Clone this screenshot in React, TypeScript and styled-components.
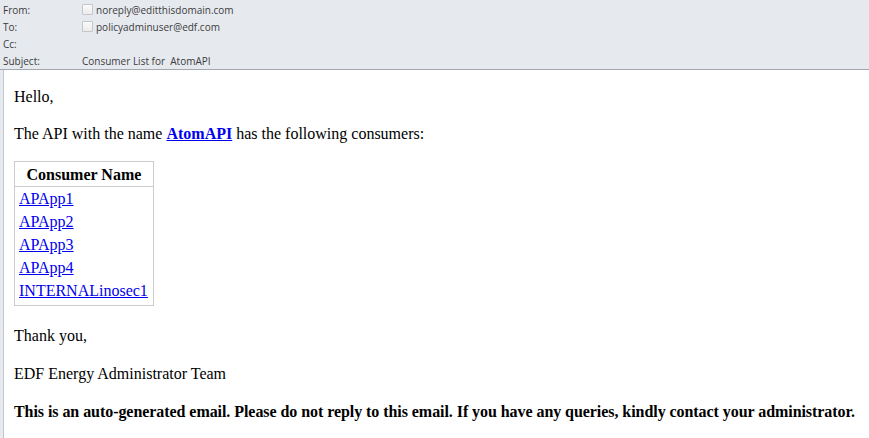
import React from "react";
import styled, { createGlobalStyle } from "styled-components";

const Global = createGlobalStyle`
  html, body { margin: 0; padding: 0; background: #e6e9ee; }
  body { width: 869px; height: 438px; overflow: hidden; }
`;

const Page = styled.div`
  display: flex;
  flex-direction: column;
  width: 869px;
  height: 438px;
  background: #e6e9ee;
`;

const Header = styled.div`
  display: flex;
  flex-direction: column;
  padding: 1px 0 0 3px;
  height: 68px;
  border-bottom: 1px solid #a3a7ae;
  font-family: "Open Sans", "Noto Sans", sans-serif;
  font-size: 10px;
  color: #3c3c3c;
`;

const HeaderRow = styled.div`
  display: flex;
  align-items: center;
  height: 17px;
`;

const Label = styled.span`
  width: 79px;
  flex: none;
`;

const Value = styled.span`
  display: flex;
  align-items: center;
  gap: 3px;
`;

const Check = styled.span`
  display: inline-block;
  width: 9px;
  height: 9px;
  border: 1px solid #c4c6ca;
  background: linear-gradient(#fafafa, #ececec);
  border-radius: 1px;
`;

const Body = styled.div`
  flex: 1;
  margin-left: 3px;
  border-left: 1px solid #c3c6cc;
  background: #ffffff;
  padding: 0 10px;
  font-family: "Liberation Serif", "Times New Roman", serif;
  font-size: 16px;
  color: #000;
`;

const P = styled.p<{ $nowrap?: boolean }>`
  margin: 16px 0;
  line-height: 21px;
  white-space: ${(p) => (p.$nowrap ? "nowrap" : "normal")};
  letter-spacing: ${(p) => (p.$nowrap ? "-0.06px" : "normal")};
`;

const Link = styled.a<{ $bold?: boolean }>`
  color: #0000ee;
  text-decoration: underline;
  font-weight: ${(p) => (p.$bold ? 700 : 400)};
`;

const Table = styled.table`
  border-collapse: collapse;
  border: 1px solid #cccccc;
  line-height: 19px;
  margin-top: 17px;
  margin-bottom: 19px;
`;

const Th = styled.th`
  padding: 3px 4px 2px;
  border-bottom: 1px solid #cccccc;
  text-align: center;
`;

const Td = styled.td<{ $last?: boolean }>`
  padding: 2px 5px 0 4px;
  padding-bottom: ${(p) => (p.$last ? "5px" : "2px")};
`;

const Closing = styled(P)`
  margin-bottom: 17px;
`;

const consumers = ["APApp1", "APApp2", "APApp3", "APApp4", "INTERNALinosec1"];

export default function App() {
  return (
    <Page>
      <Global />
      <Header>
        <HeaderRow>
          <Label>From:</Label>
          <Value>
            <Check />
            noreply@editthisdomain.com
          </Value>
        </HeaderRow>
        <HeaderRow>
          <Label>To:</Label>
          <Value>
            <Check />
            policyadminuser@edf.com
          </Value>
        </HeaderRow>
        <HeaderRow>
          <Label>Cc:</Label>
        </HeaderRow>
        <HeaderRow>
          <Label>Subject:</Label>
          <Value>Consumer List for&nbsp; AtomAPI</Value>
        </HeaderRow>
      </Header>
      <Body>
        <P>Hello,</P>
        <P>
          The API with the name <Link $bold href="#">AtomAPI</Link> has the following consumers:
        </P>
        <Table>
          <thead>
            <tr>
              <Th>Consumer Name</Th>
            </tr>
          </thead>
          <tbody>
            {consumers.map((c, i) => (
              <tr key={c}>
                <Td $last={i === consumers.length - 1}>
                  <Link href="#">{c}</Link>
                </Td>
              </tr>
            ))}
          </tbody>
        </Table>
        <Closing>Thank you,</Closing>
        <Closing>EDF Energy Administrator Team</Closing>
        <P $nowrap>
          <b>
            This is an auto-generated email. Please do not reply to this email. If you have any queries, kindly
            contact your administrator.
          </b>
        </P>
      </Body>
    </Page>
  );
}
